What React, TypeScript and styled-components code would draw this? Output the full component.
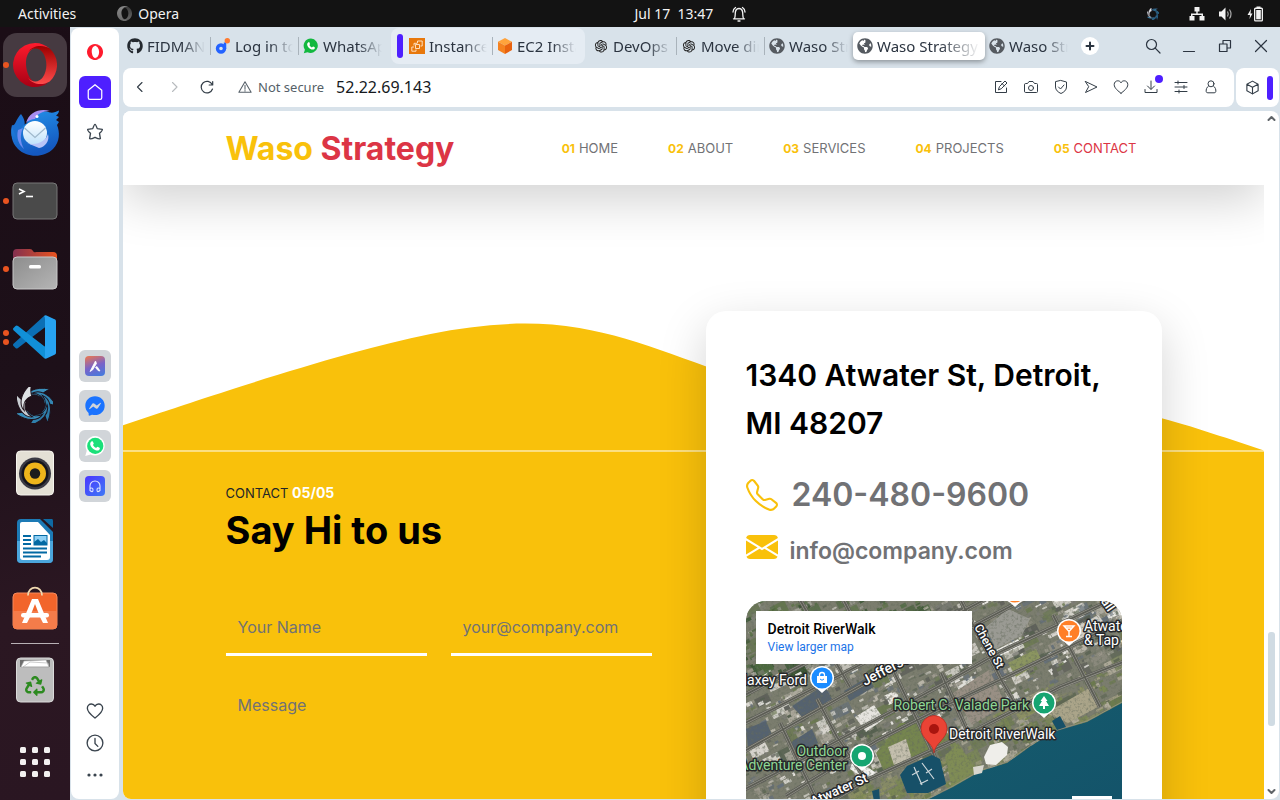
import React from "react";
import styled, { createGlobalStyle } from "styled-components";
import { BsTelephone, BsEnvelopeFill } from "react-icons/bs";
import { FaGithub, FaGlobeAmericas, FaFacebookMessenger, FaRecycle } from "react-icons/fa";
import { AiOutlineOpenAI } from "react-icons/ai";

const ui = `"Noto Sans", "Open Sans", sans-serif`;
const brand = `Inter, "Liberation Sans", sans-serif`;
const c = {
  yellow: "#f9c10b",
  red: "#dc3545",
  gray: "#717275",
  chrome: "#d8e2ea",
  violet: "#4e1fff",
  ink: "#2b3440",
  orange: "#e95420",
};

const Global = createGlobalStyle`
  * { box-sizing: border-box; }
  body { margin: 0; background: #131313; font-family: ${ui}; }
  button { border: 0; padding: 0; margin: 0; background: none; font: inherit; color: inherit; cursor: pointer; }
  a { color: inherit; text-decoration: none; }
  svg { display: block; flex: none; }
  h1, h2, h3, p { margin: 0; }
`;

/* ---------- desktop ---------- */

const Desktop = styled.div`
  display: flex;
  flex-direction: column;
  height: 100vh;
  overflow: hidden;
`;

const TopBar = styled.header`
  display: grid;
  grid-template-columns: 617fr auto 517fr;
  align-items: center;
  flex: none;
  height: 27px;
  padding: 0 16px 0 18px;
  background: #131313;
  color: #f2f2f2;
  font-size: 14px;
`;

const TopGroup = styled.div<{ $end?: boolean; $gap: number }>`
  display: flex;
  align-items: center;
  justify-content: ${(p) => (p.$end ? "flex-end" : "flex-start")};
  gap: ${(p) => p.$gap}px;
  white-space: pre;
`;

const TraySpacer = styled.i`
  width: 4px;
`;

const AppMenu = styled.button`
  display: flex;
  align-items: center;
  gap: 6px;
`;

const Workspace = styled.div`
  display: flex;
  flex: 1;
  min-height: 0;
`;

const Dock = styled.nav`
  display: flex;
  flex-direction: column;
  align-items: center;
  gap: 4px;
  flex: none;
  width: 70px;
  padding: 6px 0;
  background: linear-gradient(165deg, #1b0d16 0%, #1d1019 45%, #2b1722 75%, #2a1622 100%);
`;

const DockItem = styled.button<{ $active?: boolean; $push?: boolean }>`
  position: relative;
  display: flex;
  align-items: center;
  justify-content: center;
  flex: none;
  width: 64px;
  height: 64px;
  margin-top: ${(p) => (p.$push ? "auto" : "0")};
  border-radius: 14px;
  background: ${(p) => (p.$active ? "#463a41" : "transparent")};
`;

const Dots = styled.span`
  position: absolute;
  left: 0;
  top: 0;
  bottom: 0;
  display: flex;
  flex-direction: column;
  justify-content: center;
  gap: 3px;
`;

const Dot = styled.i`
  width: 6px;
  height: 6px;
  border-radius: 50%;
  background: ${c.orange};
`;

const DockRule = styled.hr`
  width: 48px;
  height: 1px;
  margin: -2px 0 0;
  border: 0;
  background: #b8b1b5;
`;

/* ---------- browser ---------- */

const Browser = styled.div`
  display: flex;
  flex: 1;
  min-width: 0;
  gap: 4px;
  padding: 1px 0 1px 1px;
  background: ${c.chrome};
`;

const Side = styled.aside`
  display: flex;
  flex-direction: column;
  align-items: center;
  gap: 8px;
  flex: none;
  width: 48px;
  padding: 8px 0;
  border-radius: 8px;
  background: #fff;
  color: #3a444e;
`;

const SideButton = styled.button<{ $tone?: string }>`
  display: flex;
  align-items: center;
  justify-content: center;
  width: 32px;
  height: 32px;
  border-radius: 6px;
  background: ${(p) => p.$tone ?? "transparent"};
`;

const SideGroup = styled.div<{ $gap: number; $top: string }>`
  display: flex;
  flex-direction: column;
  gap: ${(p) => p.$gap}px;
  margin-top: ${(p) => p.$top};
`;

const AppTile = styled.span<{ $bg: string }>`
  display: flex;
  align-items: center;
  justify-content: center;
  width: 20px;
  height: 20px;
  border-radius: 4px;
  background: ${(p) => p.$bg};
`;

const Main = styled.div`
  display: flex;
  flex-direction: column;
  flex: 1;
  min-width: 0;
`;

const TabStrip = styled.div`
  display: flex;
  align-items: center;
  flex: none;
  height: 36px;
  margin-bottom: 4px;
  color: ${c.ink};
`;

const Tab = styled.button<{ $active?: boolean; $sep?: boolean }>`
  display: flex;
  align-items: center;
  gap: 4px;
  flex: none;
  width: ${(p) => (p.$active ? 132 : 88)}px;
  height: ${(p) => (p.$active ? 28 : 18)}px;
  padding: 0 5px 0 4px;
  border-right: ${(p) => (p.$sep ? "1px solid #a9b3bb" : "0")};
  border-radius: ${(p) => (p.$active ? 5 : 0)}px;
  background: ${(p) => (p.$active ? "#fff" : "transparent")};
  box-shadow: ${(p) => (p.$active ? "0 2px 5px rgba(0,0,0,.35)" : "none")};
  font-size: 15px;
  line-height: 20px;
`;

const TabTitle = styled.span`
  flex: 1;
  overflow: hidden;
  text-align: left;
  white-space: nowrap;
  mask-image: linear-gradient(90deg, #000 60%, transparent 100%);
`;

const TabGroup = styled.div`
  display: flex;
  align-items: center;
  gap: 0;
  flex: none;
  height: 36px;
  margin: 0 4px;
  padding: 0 4px 0 6px;
  border-radius: 8px;
  background: #e5ecf3;
`;

const VioletBar = styled.i`
  flex: none;
  width: 6px;
  height: 24px;
  margin-right: 2px;
  border-radius: 3px;
  background: ${c.violet};
`;

const NewTab = styled.button`
  display: flex;
  align-items: center;
  justify-content: center;
  flex: none;
  width: 18px;
  height: 18px;
  margin-left: 8px;
  border-radius: 50%;
  background: #fff;
`;

const WindowControls = styled.div`
  display: flex;
  margin-left: auto;
  padding-right: 1px;
`;

const ControlButton = styled.button`
  display: flex;
  align-items: center;
  justify-content: center;
  width: 36px;
  height: 36px;
`;

const AddressRow = styled.div`
  display: flex;
  gap: 2px;
  flex: none;
  height: 39px;
  margin: 0 1px 4px 0;
`;

const AddressBar = styled.div`
  display: flex;
  align-items: center;
  flex: 1;
  min-width: 0;
  padding: 0 8px 1px 0;
  border-radius: 8px;
  background: #fff;
  color: #333d47;
`;

const ToolButton = styled.button<{ $w: number; $dim?: boolean }>`
  position: relative;
  display: flex;
  align-items: center;
  justify-content: center;
  flex: none;
  width: ${(p) => p.$w}px;
  height: 32px;
  opacity: ${(p) => (p.$dim ? 0.35 : 1)};
`;

const Badge = styled.i`
  position: absolute;
  top: 4px;
  right: 3px;
  width: 8px;
  height: 8px;
  border-radius: 50%;
  background: ${c.violet};
`;

const Security = styled.button`
  display: flex;
  align-items: center;
  gap: 6px;
  margin: 0 12px 0 15px;
  color: #555f68;
  font-size: 13px;
  white-space: nowrap;
`;

const UrlInput = styled.input`
  flex: 1;
  min-width: 0;
  padding: 0;
  border: 0;
  outline: 0;
  background: transparent;
  color: #15191d;
  font-family: ${ui};
  font-size: 16px;
`;

const Extension = styled.div`
  display: flex;
  align-items: center;
  flex: none;
  width: 43px;
  padding-left: 2px;
  border-radius: 8px;
  background: #fff;
  color: #333d47;
`;

const Viewport = styled.div`
  display: flex;
  flex: 1;
  min-height: 0;
  margin-right: 1px;
  border-radius: 8px;
  overflow: hidden;
  background: #fff;
`;

const ScrollTrack = styled.div`
  display: flex;
  flex-direction: column;
  align-items: center;
  justify-content: space-between;
  flex: none;
  width: 15px;
  padding: 3px 0;
  color: #5f6468;
`;

const ScrollThumb = styled.i`
  width: 7px;
  height: 94px;
  margin-top: 448px;
  border-radius: 3px;
  background: #d0dbe3;
`;

/* ---------- site ---------- */

const Site = styled.div`
  flex: 1;
  min-width: 0;
  overflow: hidden;
  background: #fff;
  font-family: ${brand};
  color: ${c.gray};
`;

const Container = styled.div`
  width: 100%;
  max-width: 960px;
  margin: 0 auto;
  padding: 0 12px;
`;

const SiteHeader = styled.header`
  position: relative;
  z-index: 3;
  background: #fff;
  box-shadow: 0 16px 48px rgba(0, 0, 0, 0.175);
`;

const HeaderRow = styled(Container)`
  display: flex;
  align-items: center;
  justify-content: space-between;
  height: 74px;
  padding-right: 37px;
`;

const Logo = styled.a`
  color: ${c.yellow};
  font-size: 32px;
  font-weight: 700;
  white-space: nowrap;
  span { color: ${c.red}; }
`;

const SiteNav = styled.nav`
  display: flex;
  gap: 50px;
`;

const NavLink = styled.a<{ $active?: boolean }>`
  display: flex;
  align-items: baseline;
  gap: 4px;
  color: ${(p) => (p.$active ? c.red : c.gray)};
  font-size: 13px;
  line-height: 20px;
  white-space: nowrap;
  small {
    color: ${c.yellow};
    font-size: 12px;
    font-weight: 700;
  }
`;

const Wave = styled.svg`
  width: 100%;
  height: auto;
  margin-top: 12px;
`;

const Contact = styled.section`
  border-top: 1px solid #fbdf80;
  background: ${c.yellow};
`;

const ContactGrid = styled(Container)`
  display: grid;
  grid-template-columns: minmax(0, 1fr) minmax(0, 1fr);
  gap: 24px;
`;

const FormColumn = styled.div`
  padding: 29px 30px 0 0;
`;

const Kicker = styled.p`
  color: #212529;
  font-size: 13px;
  line-height: 24px;
  strong { color: #fff; font-size: 14px; }
`;

const Title = styled.h2`
  margin-bottom: 45px;
  color: #000;
  font-size: 38px;
  font-weight: 700;
  line-height: 50px;
`;

const Form = styled.form`
  display: grid;
  grid-template-columns: minmax(0, 1fr) minmax(0, 1fr);
  gap: 24px;
`;

const Field = styled.input`
  width: 100%;
  height: 56px;
  padding: 2px 12px 0;
  border: 0;
  border-bottom: 3px solid #fff;
  border-radius: 0;
  outline: 0;
  background: transparent;
  font: 16px/24px ${brand};
  &::placeholder { color: ${c.gray}; opacity: 1; }
`;

const MessageField = styled.textarea`
  grid-column: 1 / -1;
  height: 150px;
  padding: 13px 12px;
  border: 0;
  border-bottom: 3px solid #fff;
  outline: 0;
  resize: none;
  background: transparent;
  font: 16px/24px ${brand};
  &::placeholder { color: ${c.gray}; opacity: 1; }
`;

const Card = styled.aside`
  position: relative;
  z-index: 1;
  margin-top: -141px;
  padding: 40px;
  border-radius: 20px;
  background: #fff;
  box-shadow: 0 16px 48px rgba(0, 0, 0, 0.175);
`;

const Address = styled.h3`
  margin-bottom: 24px;
  color: #000;
  font-size: 30px;
  font-weight: 600;
  line-height: 48px;
`;

const ContactLine = styled.a<{ $big?: boolean }>`
  display: flex;
  align-items: ${(p) => (p.$big ? "center" : "flex-start")};
  gap: ${(p) => (p.$big ? 14 : 12)}px;
  margin-bottom: ${(p) => (p.$big ? 12 : 30)}px;
  color: ${c.gray};
  font-size: ${(p) => (p.$big ? 32 : 23)}px;
  font-weight: 600;
  line-height: ${(p) => (p.$big ? 48 : 40)}px;
  svg { color: ${c.yellow}; }
`;

const MapFrame = styled.div`
  position: relative;
  height: 300px;
  border-radius: 20px;
  overflow: hidden;
  font-family: Roboto, sans-serif;
`;

const MapInfo = styled.div`
  position: absolute;
  left: 10px;
  top: 10px;
  display: flex;
  flex-direction: column;
  width: 216px;
  padding: 9px 12px 8px;
  background: #fff;
  line-height: 18px;
  font-size: 14px;
  font-weight: 500;
  color: #000;
  a { color: #1a73e8; font-size: 12px; font-weight: 400; }
`;

const MapZoom = styled.button`
  position: absolute;
  right: 10px;
  top: 195px;
  width: 40px;
  height: 81px;
  background: #fff;
`;

/* ---------- line icons ---------- */

type LineProps = { size?: number; box?: number; w?: number; children: React.ReactNode };
const Line = ({ size = 16, box = 16, w = 1, children }: LineProps) => (
  <svg width={size} height={size} viewBox={`0 0 ${box} ${box}`} fill="none" stroke="currentColor" strokeWidth={w} strokeLinecap="round" strokeLinejoin="round" aria-hidden="true">
    {children}
  </svg>
);

const heart = "M8 14.2C5.5 12.3 1.2 9.200 1.200 5.600 1.200 3.300 2.900 1.800 4.800 1.800 6.200 1.800 7.400 2.500 8 3.800 8.600 2.500 9.800 1.800 11.200 1.800 13.100 1.800 14.800 3.300 14.800 5.600 14.800 9.200 10.500 12.300 8 14.200Z";

const OperaMark = ({ size, dark }: { size: number; dark?: boolean }) => {
  const id = dark ? "od" : "o" + size;
  return (
    <svg width={size} height={size} viewBox="0 0 44 44" aria-hidden="true">
      <defs>
        <linearGradient id={id + "a"} x1="0" y1="0" x2="0" y2="1">
          <stop offset="0" stopColor={dark ? "#8a8a8a" : "#ff1b2d"} />
          <stop offset="1" stopColor={dark ? "#6a6a6a" : size > 20 ? "#a70014" : "#ff1b2d"} />
        </linearGradient>
        <linearGradient id={id + "b"} x1="0" y1="0" x2="0" y2="1">
          <stop offset="0" stopColor={dark ? "#3c3c3c" : size > 20 ? "#9c0000" : "#ff1b2d"} />
          <stop offset="1" stopColor={dark ? "#666" : size > 20 ? "#ff4b4b" : "#ff1b2d"} />
        </linearGradient>
      </defs>
      <path fillRule="evenodd" fill={`url(#${id}a)`} d="M22 0A22 22 0 1 0 36.700 38.400C31 42 22 42 17 35 13 29 10 14 18 7 24 2 32 3 36.700 5.600A22 22 0 0 0 22 0Z" />
      <path fill={`url(#${id}b)`} d="M15 9C20 2 30 1.500 36.700 5.600 46.500 14.500 46.500 29.500 36.700 38.400 30 42.500 20 42 15 35 19 39.500 26 40 30 34 34.500 27 34.500 17 30 10 26 4 19 4.500 15 9Z" />
    </svg>
  );
};

const Blade = ({ a, fill }: { a: number; fill: string }) => (
  <path
    transform={`rotate(${a} 20 20)`}
    fill={fill}
    stroke="#1d1019"
    strokeWidth="1"
    d="M9 15C10 7 20 1 35 4 31 6 27 8 25 12 19 8 13 10 9 15Z"
  />
);
const bladeTones = ["#3a8fbb", "#3486b2", "#2e7ca8", "#2f7fab", "#3a8fbb", "#c9ced3", "#dfe2e5"];
const Shutter = ({ size }: { size: number }) => (
  <svg width={size} height={size} viewBox="2 2 36 36" aria-hidden="true">
    {bladeTones.map((tone, i) => <Blade key={i} a={i * 51.4} fill={tone} />)}
  </svg>
);

const Thunderbird = () => (
  <svg width="50" height="50" viewBox="0 0 50 50" aria-hidden="true">
    <defs>
      <linearGradient id="tb" x1="0" y1="0" x2="0.300" y2="1">
        <stop offset="0" stopColor="#2494ea" /><stop offset="1" stopColor="#1458c0" />
      </linearGradient>
      <linearGradient id="te" x1="0" y1="0" x2="0" y2="1">
        <stop offset="0" stopColor="#ffffff" /><stop offset="1" stopColor="#bfe2fb" />
      </linearGradient>
    </defs>
    <path fill="#1b6fd0" d="M2 17C5 19 6 11 11 6 15 11 16 17 13 21L8 36C1 32 0 24 2 17Z" />
    <path fill="url(#tb)" d="M17 15C20 5 31 1 40 4.500 43 5 46 4 49 2.500 49 5 47 7 46 7.500L49 9 46 12 49 14 47 17C50 24 50 34 43 41 34 50 17 50 8 41 1 34 1 27 2 19 5 27 7 31 9 31 8 25 12 17 17 15Z" />
    <path fill="#a58df0" d="M16 15C19 4 30 0 40 3 32 3 27 6 25 11 22 11 19 12 16 15Z" />
    <path fill="#6f8df0" d="M8 22C6 30 9 37 14 41 10 34 10 26 13 20Z" />
    <circle cx="25" cy="25" r="12" fill="url(#te)" />
    <path d="M14.500 20 25 29.500 35.500 20" fill="none" stroke="#9fb8cc" strokeWidth="1.200" />
    <path fill="#b9c4f7" d="M17 35C27 38 36 33 38 26 40 33 35 39 29 40Z" />
    <circle cx="27" cy="8.500" r="1.500" fill="#fff" />
  </svg>
);

const Terminal = () => (
  <svg width="46" height="40" viewBox="0 0 46 40" aria-hidden="true">
    <rect x="1" y="2" width="44" height="36" rx="4" fill="#4a4a4a" stroke="#777" />
    <path d="M7 8 12 10.500 7 13" fill="none" stroke="#fff" strokeWidth="1.600" />
    <path d="M14 15.500H21" stroke="#fff" strokeWidth="1.600" />
  </svg>
);

const Files = () => (
  <svg width="46" height="42" viewBox="0 0 46 42" aria-hidden="true">
    <defs>
      <linearGradient id="fo"><stop offset="0" stopColor="#83304f" /><stop offset="1" stopColor="#e95420" /></linearGradient>
      <linearGradient id="fg" x2="1" y2="1"><stop offset="0" stopColor="#8d8d8d" /><stop offset="1" stopColor="#b5b5b5" /></linearGradient>
    </defs>
    <path fill="url(#fo)" d="M1 5Q1 1 5 1H18Q20 1 21 3T24 4H41Q45 4 45 8V20H1Z" />
    <rect x="1" y="9" width="44" height="32" rx="4" fill="url(#fg)" stroke="#c8c8c8" />
    <rect x="17" y="17" width="12" height="3.500" rx="1.500" fill="#fff" />
  </svg>
);

const VsCode = () => (
  <svg width="44" height="44" viewBox="0 0 44 44" aria-hidden="true">
    <path fill="#0b6fb5" d="M31 1 43 5 31 13 5 33Q3.500 34 2.500 33L.5 31Q-.5 30 .5 28.800Z" />
    <path fill="#1190d8" d="M31 43 43 38 31 31 5 11Q3.500 10 2.500 11L.5 13Q-.5 14 .5 15.200Z" />
    <path fill="#27a3f1" d="M31 1Q32 0 33.500.500L42 4.500Q43 5 43 6.500V37.500Q43 39 42 39.500L33.500 43.500Q32 44 31 43 32 42 32 40V4Q32 2 31 1Z" />
  </svg>
);

const Rhythmbox = () => (
  <svg width="38" height="46" viewBox="0 0 38 46" aria-hidden="true">
    <rect x=".5" y="1" width="37" height="44" rx="4" fill="#e4e0d5" stroke="#f6f4ee" />
    <circle cx="19" cy="23.500" r="16" fill="#3b3a44" />
    <circle cx="19" cy="23.500" r="13.500" fill="#15151c" />
    <circle cx="19" cy="23.500" r="11" fill="#eeb51b" />
    <circle cx="19" cy="23.500" r="5.200" fill="#1c1c1c" />
  </svg>
);

const Writer = () => (
  <svg width="38" height="46" viewBox="0 0 38 46" aria-hidden="true">
    <path fill="#1c7ab5" d="M5 1H24L37 14V41Q37 45 33 45H5Q1 45 1 41V5Q1 1 5 1Z" />
    <path fill="#4ba6dc" d="M1 23H37V41Q37 45 33 45H5Q1 45 1 41Z" />
    <path fill="#fff" d="M6 4H22L34 17V39Q34 42 31 42H7Q4 42 4 39V6Q4 4 6 4Z" />
    <path fill="#0f6aa3" d="M27 1H36Q37 1 37 3V10Z" />
    <path d="M7 18H15M7 22H15M7 26H15M7 30.500H31M7 34.500H31M7 38.500H25" stroke="#0369a3" strokeWidth="1.800" />
    <rect x="18" y="17.500" width="13" height="9.500" fill="#8ed0f5" stroke="#0369a3" />
    <path fill="#0369a3" d="M18 27V24L22 21 25 24 28 22 31 25V27Z" />
  </svg>
);

const Software = () => (
  <svg width="46" height="46" viewBox="0 0 46 46" aria-hidden="true">
    <rect x="1" y="7" width="44" height="36" rx="4" fill="#f2652b" stroke="#f58a5c" />
    <path fill="#f47c4a" d="M1 25H45V39Q45 43 41 43H5Q1 43 1 39Z" />
    <path d="M16 9.500C16 -1 30 -1 30 9.500" fill="none" stroke="#f0d9b0" strokeWidth="1.800" />
    <path fill="#fff" fillRule="evenodd" d="M20 13H26L36 37H31L28 31H18L15 37H10ZM23 18 19.500 27H26.500Z" />
    <rect x="9" y="27" width="28" height="4.500" rx="2.200" fill="#fff" />
  </svg>
);

const Trash = () => (
  <svg width="38" height="46" viewBox="0 0 38 46" aria-hidden="true">
    <rect x=".5" y="1" width="37" height="44" rx="4" fill="#bdbdbd" stroke="#dadada" />
    <path fill="#6d6d6d" d="M4 3H34V10H4Z" />
    <path fill="#fff" stroke="#aaa" strokeWidth=".6" d="M5 10 8 4 30 3 33 10ZM7 10 14 5 32 6 33 10Z" />
    <g transform="translate(9 19)" stroke="#2c8a1f" strokeWidth="22"><FaRecycle size={20} color="#2c8a1f" /></g>
  </svg>
);

const AppGrid = () => (
  <svg width="30" height="30" viewBox="0 0 30 30" fill="#f2f0f0" aria-hidden="true">
    {[0, 12, 24].map((y) => [0, 12, 24].map((x) => <rect key={x + "-" + y} x={x} y={y} width="6" height="6" rx="1.500" />))}
  </svg>
);

const dock = [
  { name: "Opera", icon: <OperaMark size={44} />, dots: 1, active: true },
  { name: "Thunderbird", icon: <Thunderbird />, dots: 0 },
  { name: "Terminal", icon: <Terminal />, dots: 1 },
  { name: "Files", icon: <Files />, dots: 1 },
  { name: "Visual Studio Code", icon: <VsCode />, dots: 2 },
  { name: "Shutter", icon: <Shutter size={36} />, dots: 0 },
  { name: "Rhythmbox", icon: <Rhythmbox />, dots: 0 },
  { name: "LibreOffice Writer", icon: <Writer />, dots: 0 },
  { name: "Software", icon: <Software />, dots: 0 },
];

/* ---------- tab icons ---------- */

const BoxSvg = ({ children }: { children: React.ReactNode }) => (
  <svg width="16" height="16" viewBox="0 0 16 16" aria-hidden="true">{children}</svg>
);
const github = <FaGithub size={16} color="#24292f" />;
const openai = <AiOutlineOpenAI size={16} color="#222" />;
const globe = <FaGlobeAmericas size={16} color="#555a60" />;
const ocean = (
  <BoxSvg>
    <circle cx="6" cy="10.500" r="3.500" fill="none" stroke="#2463ff" strokeWidth="3.400" />
    <path d="M10 4.500V11" stroke="#2463ff" strokeWidth="2.500" />
    <circle cx="12.300" cy="2.800" r="2.700" fill="#ff7a2f" />
  </BoxSvg>
);
const whatsapp = (
  <BoxSvg>
    <path fill="#12b83f" d="M8 .5A7.200 7.200 0 1 1 4.500 14.200L.8 15.300 1.900 11.700A7.200 7.200 0 0 1 8 .5Z" />
    <path fill="#fff" d="M5.500 4.200C6.500 3.800 6.500 5 7 6 7 6.500 6.300 6.900 6.500 7.300 7 8.300 7.800 9 8.800 9.400 9.400 9.400 9.600 8.500 10.100 8.500 11 9 12 9.200 11.900 9.900 11.500 11.600 10 11.900 8.500 11.400 6.300 10.600 4.800 9 4.200 7 4 5.700 4.600 4.600 5.500 4.200Z" />
  </BoxSvg>
);
const aws = (
  <BoxSvg>
    <rect width="16" height="16" fill="#e8780c" />
    <path d="M6.500 6.500H10.500V10.500H6.500ZM5 9H2.800V13.200H7V11.500M8.500 5.300V3H13.200V8H11.500M5 7.500V5.300H8" fill="none" stroke="#ffe9cf" strokeWidth=".9" />
  </BoxSvg>
);
const ec2 = (
  <BoxSvg>
    <path fill="#ffa33c" d="M8 0 15 3.800 8 7.600 1 3.800Z" />
    <path fill="#f58220" d="M1 3.800 8 7.600V16L1 12Z" />
    <path fill="#e8620f" d="M15 3.800 8 7.600V16L15 12Z" />
  </BoxSvg>
);

type TabInfo = { title: string; icon: React.ReactNode; sep?: boolean; active?: boolean };
const leftTabs: TabInfo[] = [
  { title: "FIDMANI", icon: github, sep: true },
  { title: "Log in to", icon: ocean, sep: true },
  { title: "WhatsAp", icon: whatsapp },
];
const groupTabs: TabInfo[] = [
  { title: "Instances", icon: aws, sep: true },
  { title: "EC2 Insta", icon: ec2 },
];
const rightTabs: TabInfo[] = [
  { title: "DevOps p", icon: openai, sep: true },
  { title: "Move dir", icon: openai, sep: true },
  { title: "Waso Str", icon: globe },
  { title: "Waso Strategy -", icon: globe, active: true },
  { title: "Waso Str", icon: globe },
];
const TabItem = ({ t }: { t: TabInfo }) => (
  <Tab $active={t.active} $sep={t.sep} role="tab" aria-selected={!!t.active}>
    {t.icon}
    <TabTitle>{t.title}</TabTitle>
  </Tab>
);

/* ---------- map ---------- */

const makeRandom = (seed: number) => () => {
  seed = (seed * 1664525 + 1013904223) % 4294967296;
  return seed / 4294967296;
};

const palettes = {
  trees: ["#3f5a38", "#4d6a40", "#36502f", "#5e7448", "#7f8276", "#a3a399", "#48613b"],
  town: ["#7d7d76", "#a09c90", "#5d5f59", "#bab6aa", "#dcd9d2", "#6c7a52", "#55604f", "#8b8a7c", "#f0eee9", "#66707a"],
  shore: ["#7a8853", "#8d9162", "#a09c82", "#6b7a4d", "#b3ae9d", "#838568", "#5d6651"],
};

/* Blocks of roofs, yards and tree tops, all turned to the street grid. */
const tiles = (() => {
  const rnd = makeRandom(77);
  const out: { x: number; y: number; w: number; h: number; fill: string; o: number }[] = [];
  for (let i = 0; i < 2300; i++) {
    const x = rnd() * 390 - 8;
    const y = rnd() * 215 - 8;
    const depth = y + x * 0.5;
    const set = depth < 95 && rnd() < 0.8 ? palettes.trees : depth > 235 ? palettes.shore : palettes.town;
    const big = i < 260;
    out.push({
      x, y,
      w: (big ? 10 : 2) + rnd() * (big ? 12 : 5),
      h: (big ? 7 : 1.5) + rnd() * (big ? 7 : 3),
      fill: set[Math.floor(rnd() * set.length)],
      o: 0.6 + rnd() * 0.4,
    });
  }
  return out;
})();

const roads = [
  "M-5 124 104 69 240 -2",
  "M-5 152 134 74 267 4 290 -8",
  "M-5 190 61 156 201 81 254 51 380 -8",
  "M40 195 130 140 201 104 254 79 380 18",
  "M20 240 121 179 224 132 314 86 380 60",
  "M-5 96 60 62 160 10",
  "M214 -2 257 82 272 108",
  "M147 69 187 152 197 180",
  "M195 72 224 136",
  "M71 98 91 136 121 180",
  "M34 122 71 200",
  "M307 14 354 106",
  "M50 -8 104 86",
  "M96 -4 134 70",
];

const Poi = ({ x, y, fill, children }: { x: number; y: number; fill: string; children?: React.ReactNode }) => (
  <g transform={`translate(${x} ${y})`}>
    <path fill="#fff" d="M0 -12A12 12 0 0 1 12 0C12 6 8 9 4.500 11L0 15 -4.500 11C-8 9 -12 6 -12 0A12 12 0 0 1 0 -12Z" />
    <circle r="10.500" fill={fill} />
    {children}
  </g>
);

const SatelliteMap = () => (
  <svg width="100%" height="300" viewBox="0 0 376 300" preserveAspectRatio="xMinYMin slice" role="img" aria-label="Satellite map of Detroit RiverWalk">
    <defs>
      <filter id="grain" x="0" y="0" width="100%" height="100%">
        <feTurbulence type="fractalNoise" baseFrequency="0.35" numOctaves="3" seed="4" />
        <feColorMatrix values="0 0 0 0 0.130  0 0 0 0 0.150  0 0 0 0 0.110  2.400 0 0 0 -1.150" />
      </filter>
      <linearGradient id="river" x1="0" y1="0" x2="1" y2="1">
        <stop offset="0" stopColor="#17606f" /><stop offset="1" stopColor="#124f68" />
      </linearGradient>
    </defs>
    <rect width="376" height="300" fill="#7b7d6e" />
    {tiles.map((t, i) => (
      <rect key={i} x={t.x} y={t.y} width={t.w} height={t.h} fill={t.fill} opacity={t.o} transform={`rotate(-27 ${t.x} ${t.y})`} />
    ))}
    <path fill="#988f84" d="M207 92 243 69 260 104 226 124Z" />
    <path fill="#75854f" d="M130 152 154 122 196 122 204 138 138 170Z" />
    <path fill="#c3bead" d="M142 146 160 138 166 158 148 164Z" />
    <path fill="#e6e4df" d="M109 116 128 104 138 118 120 131Z" />
    <path fill="#55626f" d="M46 105 78 84 86 98 56 116ZM0 128 20 120 26 134 2 146ZM98 90 122 76 128 86 104 100ZM44 142 66 128 72 142 50 154Z" />
    <path fill="#7f8c55" d="M199 155 212 142 232 172 206 188Z" />
    <path fill="#8b9560" d="M262 62 290 48 296 60 270 76Z" />
    <path fill="#aaa489" d="M300 112 345 86 352 106 322 122Z" />
    <path fill="#d2d0c9" d="M316 34 352 14 360 24 324 44Z" />
    <path fill="#9a9a93" d="M240 26 262 8 284 18 276 34 250 48Z" />
    <path fill="#f2f1ed" d="M248 50 272 38 276 44 252 56ZM108 156 130 172 122 180 104 168Z" />
    <rect width="376" height="300" filter="url(#grain)" opacity=".7" />
    {roads.map((d) => <path key={d} d={d} fill="none" stroke="#5d5e57" strokeWidth="4.500" />)}
    {roads.map((d) => <path key={d} d={d} fill="none" stroke="#c2c0b6" strokeWidth="3" opacity=".6" />)}
    {roads.map((d) => <path key={d} d={d} fill="none" stroke="#5c5d55" strokeWidth="1.800" />)}
    <path fill="url(#river)" d="M376 102 341 121 307 131 285 145 261 162 235 170 207 186 181 199 170 220 0 240V300H376Z" />
    <path fill="none" stroke="#8f917c" strokeWidth="1" d="M376 101 341 120 307 130 285 144 261 161 235 169 207 185 181 198" />
    <path fill="#175068" d="M154 174 161 165 186 154 194 158 200 183 182 192 161 192ZM306 120 314 115 320 126 311 129ZM126 190 133 188 134 200 128 200Z" />
    <path stroke="#cfd8dc" strokeWidth="1.200" fill="none" d="M168 166 176 184M176 162 188 178M166 174 173 170M174 183 182 179M180 172 186 168" />
    <path fill="#efeeea" d="M238 156 244 144 256 141 262 146 261 154 250 164 240 163Z" />
    <path fill="#d8d6ce" d="M227 166 238 164 236 172 228 174Z" />
    <g fontFamily="Roboto, sans-serif" fontSize="14" fill="#fff" stroke="#26282a" strokeWidth="3" paintOrder="stroke" strokeLinejoin="round">
      <g fontWeight="500">
        <text transform="translate(119 85) rotate(-28)">Jefferson Ave</text>
        <text transform="translate(228 26) rotate(61)" fontSize="12">Chene St</text>
        <text transform="translate(67 205) rotate(-24)" fontSize="13">Atwater St</text>
        <text transform="translate(348 -9) rotate(55)" fontSize="13">Wall</text>
      </g>
      <text x="61" y="84" textAnchor="end">Maxey Ford</text>
      <text x="338" y="30">Atwater Brewery</text>
      <text x="338" y="44">&amp; Tap House</text>
      <text x="203" y="138">Detroit RiverWalk</text>
      <g fill="#8fd694">
        <text x="283" y="109" textAnchor="end">Robert C. Valade Park</text>
        <text x="101" y="155" textAnchor="end">Outdoor</text>
        <text x="101" y="169" textAnchor="end">Adventure Center</text>
      </g>
    </g>
    <Poi x={269} y={-9} fill="#ff7f27" />
    <Poi x={76} y={77} fill="#1a8cff">
      <path fill="#fff" d="M-5 -2H5V5H-5Z" /><path d="M-2.500 -1V-3A2.500 2.500 0 0 1 2.500 -3V-1" fill="none" stroke="#fff" strokeWidth="1.300" />
      <path d="M-2 1Q0 3.500 2 1" fill="none" stroke="#1a8cff" />
    </Poi>
    <Poi x={323} y={30} fill="#ff7f27">
      <path d="M-5 -5H5L0 .5ZM0 0V5.500M-3 5.500H3M-3 -3H3" fill="none" stroke="#fff" strokeWidth="1.400" />
    </Poi>
    <Poi x={298} y={102} fill="#16a571">
      <path fill="#fff" d="M0 -7 3.500 -2H2L5 3H1V6H-1V3H-5L-2 -2H-3.500Z" />
    </Poi>
    <Poi x={116} y={155} fill="#16a571"><circle r="4" fill="#fff" /></Poi>
    <path fill="#ea4335" stroke="#b5281e" strokeWidth=".7" d="M188 152C187 142 175 138 175 127.500A13 13 0 0 1 201 127.500C201 138 189 142 188 152Z" />
    <circle cx="188" cy="128" r="5" fill="#a8150f" />
  </svg>
);

/* ---------- page ---------- */

const nav = ["Home", "About", "Services", "Projects", "Contact"];

const tools: { name: string; icon: React.ReactNode; badge?: boolean }[] = [
  { name: "Edit page", icon: <Line><path d="M8 2.500H2.500V13.500H13.500V9M5.500 10.500 6.500 7.500 12 2 14 4 8.500 9.500ZM9 4.500 11.500 7" /></Line> },
  { name: "Snapshot", icon: <Line><path d="M1.500 5.500Q1.500 4.500 2.500 4.500H4.500L6 2.500H10L11.500 4.500H13.500Q14.500 4.500 14.500 5.500V12.500Q14.500 13.500 13.500 13.500H2.500Q1.500 13.500 1.500 12.500Z" /><circle cx="8" cy="9" r="2.500" /></Line> },
  { name: "Protection", icon: <Line><path d="M8 1.500 13.500 3V8C13.500 11 11 13.200 8 14.500 5 13.200 2.500 11 2.500 8V3ZM5.500 8 7.500 10 11 6" /></Line> },
  { name: "Share", icon: <Line><path d="M2.500 2.500 14 8 2.500 13.500 5.500 8Z" /></Line> },
  { name: "Favourite", icon: <Line><path d={heart} /></Line> },
  { name: "Downloads", icon: <Line><path d="M8 2V10M4.500 7 8 10.500 11.500 7M2 10.500V13.500H14V10.500" /></Line>, badge: true },
  { name: "Easy setup", icon: <Line><path d="M2 3.500H14M2 8H14M2 12.500H14M5 2V5M11 6.500V9.500M6 11V14" /></Line> },
  { name: "Profile", icon: <Line><circle cx="8" cy="4.800" r="3" /><path d="M5.500 7C3.500 8.500 3 10.500 3.200 12.500Q3.400 13.800 4.800 13.800H11.200Q12.600 13.800 12.800 12.500C13 10.500 12.500 8.500 10.500 7" /></Line> },
];

export default function App() {
  return (
    <Desktop>
      <Global />
      <TopBar>
        <TopGroup $gap={41}>
          <button>Activities</button>
          <AppMenu><OperaMark size={15} dark />Opera</AppMenu>
        </TopGroup>
        <TopGroup $gap={18}>
          <span>Jul 17  13:47</span>
          <Line size={16}><path d="M3.500 12.500C4.500 10.500 4 8 4.500 5.500 5 3 6.500 2.500 8 2.500S11 3 11.500 5.500C12 8 11.500 10.500 12.500 12.500M2.500 12.800H13.500M7 15H9M2 6Q2 3 4.500 1.500M14 6Q14 3 11.500 1.500" strokeWidth="1.300" /></Line>
        </TopGroup>
        <TopGroup $gap={13} $end>
          <Shutter size={12} />
          <TraySpacer />
          <svg width="16" height="14" viewBox="0 0 16 14" fill="#f2f2f2"><path d="M5.500 0H10.500V4.500H8.700V6.500H14V9H15.500V13.500H10.500V9H12.500V8H3.500V9H5.500V13.500H.5V9H2V6.500H7.300V4.500H5.500Z" /></svg>
          <svg width="16" height="14" viewBox="0 0 16 14" fill="#f2f2f2"><path d="M1 4.500H3.500L7.500 .5V13.500L3.500 9.500H1Z" /><path d="M9.500 4.500Q11 7 9.500 9.500M11.500 2.500Q14.500 7 11.500 11.500" fill="none" stroke="#aaa" strokeWidth="1.200" /></svg>
          <svg width="17" height="16" viewBox="0 0 17 16" fill="#f2f2f2"><path d="M4 3 .5 9H3L2.500 13 5.500 7.500H3.500Z" /><path d="M9.500 1.500V.5H13.500V1.500H14.500Q16 1.500 16 3V14Q16 15.500 14.500 15.500H8.500Q7 15.500 7 14V3Q7 1.500 8.500 1.500ZM8.300 3V14.200H14.700V3Z" fillRule="evenodd" /><rect x="9.200" y="4" width="4.600" height="9.300" /></svg>
        </TopGroup>
      </TopBar>

      <Workspace>
        <Dock aria-label="Dock">
          {dock.map((d) => (
            <DockItem key={d.name} $active={d.active} aria-label={d.name}>
              {d.icon}
              {d.dots > 0 && <Dots>{Array.from({ length: d.dots }, (_, i) => <Dot key={i} />)}</Dots>}
            </DockItem>
          ))}
          <DockRule />
          <DockItem aria-label="Trash"><Trash /></DockItem>
          <DockItem $push aria-label="Show applications"><AppGrid /></DockItem>
        </Dock>

        <Browser>
          <Side>
            <SideButton aria-label="Opera menu"><OperaMark size={16} /></SideButton>
            <SideButton $tone={c.violet} aria-label="Home">
              <Line size={18} w={1.1}><g stroke="#fff"><path d="M8 1.500 14 6.500V13Q14 14.500 12.500 14.500H3.500Q2 14.500 2 13V6.500Z" /></g></Line>
            </SideButton>
            <SideButton aria-label="Pinboards">
              <Line size={18} w={1.2}><path d="M8 1.200Q8.700 1.200 10 5L14.500 5.600Q15 6.300 12 9.200L12.800 13.800Q12.300 14.700 8 12.700 3.700 14.700 3.200 13.800L4 9.200Q1 6.300 1.500 5.600L6 5Q7.300 1.200 8 1.200Z" /></Line>
            </SideButton>
            <SideGroup $gap={8} $top="194px">
              <SideButton $tone="#d1d5d9" aria-label="Aria">
                <AppTile $bg="linear-gradient(160deg, #f0784a, #7a63c8 50%, #3f7ee0)">
                  <svg width="14" height="14" viewBox="0 0 14 14"><path d="M2 12.500 7.500 2 8.500 4.500 4.500 11ZM7.500 8.500 9 7.500 12 12 10 11.500Z" fill="#fff" stroke="#fff" strokeWidth=".8" /></svg>
                </AppTile>
              </SideButton>
              <SideButton $tone="#d1d5d9" aria-label="Messenger"><FaFacebookMessenger size={20} color="#1a73ff" /></SideButton>
              <SideButton $tone="#d1d5d9" aria-label="WhatsApp">
                <svg width="20" height="20" viewBox="0 0 16 16"><path fill="#fff" d="M8 0A7.800 7.800 0 1 1 4.500 14.800L.2 16 1.400 11.700A7.800 7.800 0 0 1 8 0Z" /><circle cx="8.200" cy="7.900" r="6.500" fill="#1ae07a" /><path fill="#fff" d="M5.500 4.200C6.500 3.800 6.500 5 7 6 7 6.500 6.300 6.900 6.500 7.300 7 8.300 7.800 9 8.800 9.400 9.400 9.400 9.600 8.500 10.100 8.500 11 9 12 9.200 11.900 9.900 11.500 11.600 10 11.900 8.500 11.400 6.300 10.600 4.800 9 4.200 7 4 5.700 4.600 4.600 5.500 4.200Z" /></svg>
              </SideButton>
              <SideButton $tone="#d1d5d9" aria-label="Player">
                <AppTile $bg="linear-gradient(135deg, #4a35ff, #3f7af5)">
                  <svg width="12" height="13" viewBox="0 0 12 13" fill="none" stroke="#dfe4ff" strokeWidth="1.100"><path d="M1 9V6A5 5 0 0 1 11 6V9M1 8.500Q4 7 4 10T1 10.500ZM11 8.500Q8 7 8 10T11 10.500Z" /></svg>
                </AppTile>
              </SideButton>
            </SideGroup>
            <SideGroup $gap={0} $top="auto">
              <SideButton aria-label="Likes"><Line size={18} w={1.2}><path d={heart} /></Line></SideButton>
              <SideButton aria-label="History"><Line size={18} w={1.2}><circle cx="8" cy="8" r="7" /><path d="M8 4V8.500L10.500 11" /></Line></SideButton>
              <SideButton aria-label="More"><svg width="16" height="4" viewBox="0 0 16 4" fill="#3a444e"><circle cx="2" cy="2" r="1.600" /><circle cx="8" cy="2" r="1.600" /><circle cx="14" cy="2" r="1.600" /></svg></SideButton>
            </SideGroup>
          </Side>

          <Main>
            <TabStrip role="tablist">
              {leftTabs.map((t, i) => <TabItem key={i} t={t} />)}
              <TabGroup>
                <VioletBar />
                {groupTabs.map((t, i) => <TabItem key={i} t={t} />)}
              </TabGroup>
              {rightTabs.map((t, i) => <TabItem key={i} t={t} />)}
              <NewTab aria-label="New tab"><Line size={10} box={10} w={2}><path d="M5 1.500V8.500M1.500 5H8.500" /></Line></NewTab>
              <WindowControls>
                <ControlButton aria-label="Search tabs"><Line w={1.2}><circle cx="6.500" cy="6.500" r="5" /><path d="M10.200 10.200 15 15" /></Line></ControlButton>
                <ControlButton aria-label="Minimize"><Line w={1.2}><path d="M2.500 13.500H13.500" /></Line></ControlButton>
                <ControlButton aria-label="Restore"><Line w={1.2}><path d="M2.500 6H10V13.500H2.500ZM6 6V2.500H13.500V10H10" /></Line></ControlButton>
                <ControlButton aria-label="Close"><Line w={1.2}><path d="M2.500 2.500 13.500 13.500M13.500 2.500 2.500 13.500" /></Line></ControlButton>
              </WindowControls>
            </TabStrip>

            <AddressRow>
              <AddressBar>
                <ToolButton $w={34} aria-label="Back"><Line w={1.1}><path d="M10 3.500 5.500 8 10 12.500" /></Line></ToolButton>
                <ToolButton $w={34} $dim aria-label="Forward"><Line w={1.1}><path d="M6.500 3.500 11 8 6.500 12.500" /></Line></ToolButton>
                <ToolButton $w={32} aria-label="Reload"><Line w={1.2}><path d="M13.500 10A5.800 5.800 0 1 1 13.200 5.500M13.700 2.500V6H10.200" /></Line></ToolButton>
                <Security>
                  <Line size={14} box={16} w={1.2}><path d="M8 2 15 14H1ZM8 6V10.500M8 12V12.500" /></Line>
                  Not secure
                </Security>
                <UrlInput aria-label="Address" defaultValue="52.22.69.143" />
                {tools.map((t) => (
                  <ToolButton key={t.name} $w={30} aria-label={t.name}>{t.icon}{t.badge && <Badge />}</ToolButton>
                ))}
              </AddressBar>
              <Extension>
                <ToolButton $w={29} aria-label="Extensions"><Line size={15} w={1.2}><path d="M8 1.200 14 4.500V11.500L8 14.800 2 11.500V4.500ZM2 4.500 8 7.800 14 4.500M8 7.800V14.800" /></Line></ToolButton>
                <VioletBar />
              </Extension>
            </AddressRow>

            <Viewport>
              <Site>
                <SiteHeader>
                  <HeaderRow>
                    <Logo href="#home">Waso <span>Strategy</span></Logo>
                    <SiteNav>
                      {nav.map((n, i) => (
                        <NavLink key={n} href={`#${n.toLowerCase()}`} $active={n === "Contact"}>
                          <small>{`0${i + 1}`}</small> {n.toUpperCase()}
                        </NavLink>
                      ))}
                    </SiteNav>
                  </HeaderRow>
                </SiteHeader>
                <Wave viewBox="0 0 1440 320" aria-hidden="true">
                  <path fill={c.yellow} d="M0 288L48 272C96 256 192 224 288 197.300C384 170.700 480 149.300 576 165.300C672 181.300 768 234.700 864 250.700C960 266.700 1056 245.300 1152 250.700C1248 256 1344 288 1392 304L1440 320H0Z" />
                </Wave>
                <Contact id="contact">
                  <ContactGrid>
                    <FormColumn>
                      <Kicker>CONTACT <strong>05/05</strong></Kicker>
                      <Title>Say Hi to us</Title>
                      <Form>
                        <Field aria-label="Your Name" placeholder="Your Name" />
                        <Field type="email" aria-label="Email" placeholder="your@company.com" />
                        <MessageField aria-label="Message" placeholder="Message" />
                      </Form>
                    </FormColumn>
                    <Card>
                      <Address>1340 Atwater St, Detroit, MI 48207</Address>
                      <ContactLine $big href="tel:240-480-9600"><BsTelephone />240-480-9600</ContactLine>
                      <ContactLine href="mailto:info@company.com"><BsEnvelopeFill size={32} />info@company.com</ContactLine>
                      <MapFrame>
                        <SatelliteMap />
                        <MapInfo>
                          Detroit RiverWalk
                          <a href="#map">View larger map</a>
                        </MapInfo>
                        <MapZoom aria-label="Zoom" />
                      </MapFrame>
                    </Card>
                  </ContactGrid>
                </Contact>
              </Site>
              <ScrollTrack>
                <Line size={9} box={9} w={2}><path d="M1.500 6 4.500 3 7.500 6" /></Line>
                <ScrollThumb />
                <Line size={9} box={9} w={2}><path d="M1.500 3 4.500 6 7.500 3" /></Line>
              </ScrollTrack>
            </Viewport>
          </Main>
        </Browser>
      </Workspace>
    </Desktop>
  );
}
